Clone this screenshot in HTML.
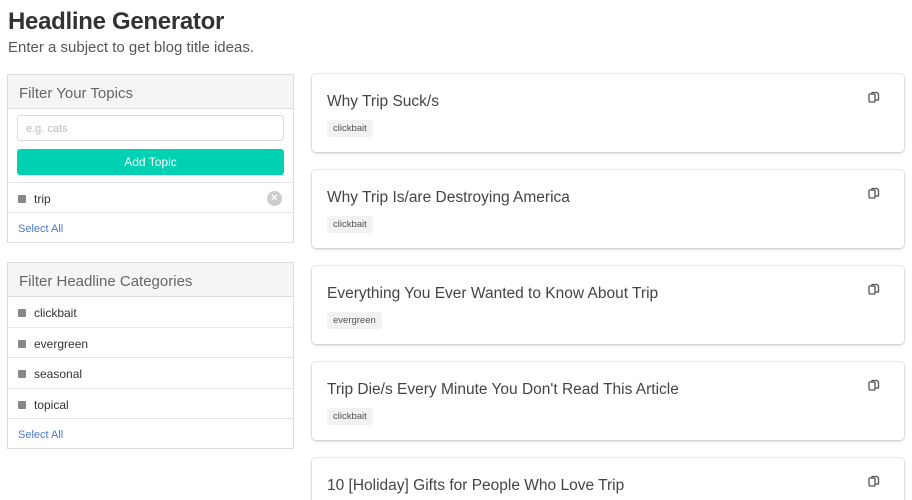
<!DOCTYPE html>
<html><head><style>
*{box-sizing:border-box;margin:0;padding:0}
html,body{width:912px;height:500px;overflow:hidden}
body{background:#fff;font-family:"Liberation Sans",sans-serif;color:#333;position:relative}
h1{position:absolute;left:8px;top:8px;font-size:24px;font-weight:bold;color:#333;letter-spacing:-0.3px}
.sub{position:absolute;left:8px;top:39px;font-size:15px;color:#555}
.panel{position:absolute;left:7px;width:287px;border:1px solid #ddd;background:#fff}
.ph{height:34px;background:#f5f5f5;border-bottom:1px solid #ddd;font-size:15px;color:#666;padding:10px 11px 0}
.row{height:30.5px;border-bottom:1px solid #e6e6e6;font-size:12px;color:#333;padding:9px 10px 0;position:relative}
.row:last-child{border-bottom:none;height:29px}
.cb{display:inline-block;width:8px;height:8px;background:#888;border-radius:1px;margin-right:8px;vertical-align:0px}
.sel{color:#4a78c8;font-size:11px;padding-top:10px}
.inp{margin:6px 9px 0;height:26px;border:1px solid #ddd;border-radius:3px;font-size:11px;color:#bbb;padding:7px 8px}
.btn{margin:8px 9px 7px;height:26px;background:#00d1b2;border-radius:3px;color:#fff;font-size:12px;text-align:center;line-height:27px}
.x{position:absolute;right:11px;top:8px;width:15px;height:15px;border-radius:50%;background:#ccc;color:#fff;font-size:11px;line-height:15px;text-align:center;font-weight:bold}
.card{position:absolute;left:312px;width:592px;height:78px;border-radius:4px;box-shadow:0 1px 3px rgba(0,0,0,.2),0 0 0 1px rgba(0,0,0,.05);background:#fff}
.card .t{position:absolute;left:15px;top:19px;font-size:15.5px;color:#444}
.card .tag{position:absolute;left:15px;top:46px;height:17px;background:#f2f2f2;border-radius:3px;font-size:9.5px;color:#555;padding:0 6px;line-height:17px}
.card svg{position:absolute;left:556px;top:17px}
</style></head><body>
<h1>Headline Generator</h1>
<div class="sub">Enter a subject to get blog title ideas.</div>
<div class="panel" style="top:74px">
<div class="ph">Filter Your Topics</div>
<div class="inp">e.g. cats</div>
<div class="btn">Add Topic</div>
<div class="row" style="border-top:1px solid #e6e6e6"><span class="cb"></span>trip<span class="x">×</span></div>
<div class="row sel">Select All</div>
</div>
<div class="panel" style="top:262px">
<div class="ph">Filter Headline Categories</div>
<div class="row"><span class="cb"></span>clickbait</div>
<div class="row"><span class="cb"></span>evergreen</div>
<div class="row"><span class="cb"></span>seasonal</div>
<div class="row"><span class="cb"></span>topical</div>
<div class="row sel">Select All</div>
</div>
<div class="card" style="top:74px"><div class="t">Why Trip Suck/s</div><div class="tag">clickbait</div><svg width="12" height="13" viewBox="0 0 12 13" fill="none" stroke="#555" stroke-width="1.3"><rect x="1" y="3" width="6" height="8" rx="1"/><path d="M4 3V1.5h5l1.5 1.5v6H7"/></svg></div>
<div class="card" style="top:170px"><div class="t">Why Trip Is/are Destroying America</div><div class="tag">clickbait</div><svg width="12" height="13" viewBox="0 0 12 13" fill="none" stroke="#555" stroke-width="1.3"><rect x="1" y="3" width="6" height="8" rx="1"/><path d="M4 3V1.5h5l1.5 1.5v6H7"/></svg></div>
<div class="card" style="top:266px"><div class="t">Everything You Ever Wanted to Know About Trip</div><div class="tag">evergreen</div><svg width="12" height="13" viewBox="0 0 12 13" fill="none" stroke="#555" stroke-width="1.3"><rect x="1" y="3" width="6" height="8" rx="1"/><path d="M4 3V1.5h5l1.5 1.5v6H7"/></svg></div>
<div class="card" style="top:362px"><div class="t">Trip Die/s Every Minute You Don't Read This Article</div><div class="tag">clickbait</div><svg width="12" height="13" viewBox="0 0 12 13" fill="none" stroke="#555" stroke-width="1.3"><rect x="1" y="3" width="6" height="8" rx="1"/><path d="M4 3V1.5h5l1.5 1.5v6H7"/></svg></div>
<div class="card" style="top:458px"><div class="t">10 [Holiday] Gifts for People Who Love Trip</div><svg width="12" height="13" viewBox="0 0 12 13" fill="none" stroke="#555" stroke-width="1.3"><rect x="1" y="3" width="6" height="8" rx="1"/><path d="M4 3V1.5h5l1.5 1.5v6H7"/></svg></div>
</body></html>
